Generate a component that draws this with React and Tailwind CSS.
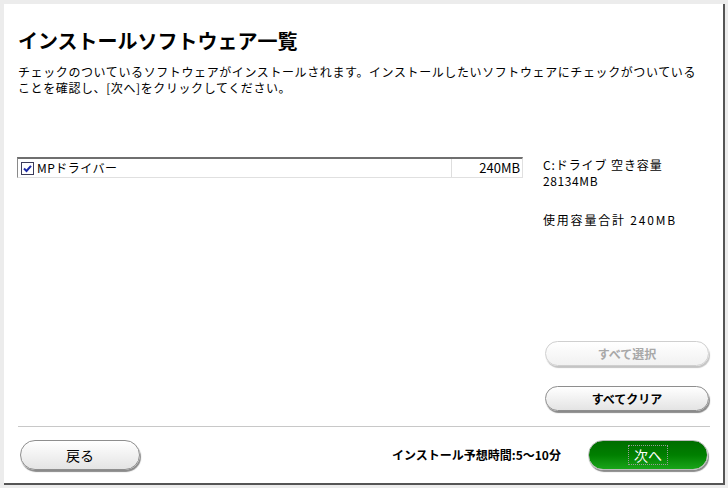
import React from 'react';

const jp = { fontFamily: '"Noto Sans CJK JP", "Liberation Sans", sans-serif' };

function PillButton({ children, disabled, className = '' }) {
  return (
    <button
      type="button"
      className={`flex items-center justify-center rounded-full border bg-gradient-to-b ${
        disabled
          ? 'border-[#cfcfcf] from-white to-[#f1f1f1] text-[#a8a8a8] shadow-[1px_2px_1px_#c4c4c4]'
          : 'border-[#8e8e8e] from-white to-[#e4e4e4] text-black shadow-[1px_2px_1px_#8a8a8a]'
      } ${className}`}
    >
      {children}
    </button>
  );
}

export default function App() {
  return (
    <div className="w-[728px] h-[488px] bg-[#ececec] pt-1 pl-1 overflow-hidden" style={jp}>
      <div className="w-[721px] h-[481px] bg-white border-r-2 border-b-2 border-[#555] flex flex-col pl-[13px] pt-[26px]">
        {/* タイトル */}
        <h1 className="ml-px text-[20px] leading-[22px] font-bold text-black">
          インストールソフトウェア一覧
        </h1>
        <div className="ml-px mt-[12px] text-[12px] text-black tracking-[0.6px]">
          <p className="h-4 leading-4 whitespace-nowrap">
            チェックのついているソフトウェアがインストールされます。インストールしたいソフトウェアにチェックがついている
          </p>
          <p className="h-4 leading-4 whitespace-nowrap">
            ことを確認し、[次へ]をクリックしてください。
          </p>
        </div>

        {/* 一覧と容量 */}
        <div className="mt-[61px] h-[254px] flex gap-5">
          <div className="w-[506px] h-[21px] border-t-2 border-l border-t-[#6f6f6f] border-l-[#8a8a8a] border-r border-b border-r-[#e0e0e0] border-b-[#e0e0e0] flex">
            <div className="flex-1 flex items-center gap-[3px] pl-[3px] border-r border-[#dedede]">
              <span className="w-[13px] h-[13px] border border-[#3b3b5a] bg-white flex items-center justify-center">
                <svg width="9" height="9" viewBox="0 0 9 9">
                  <path d="M1 4.5 L3.5 7 L8 1.8" fill="none" stroke="#1c2aa8" strokeWidth="2" />
                </svg>
              </span>
              <span className="text-[12px] leading-[16px] tracking-[0.5px] text-black">MPドライバー</span>
            </div>
            <div className="w-[70px] flex items-center justify-end pr-[2px] text-[13px] leading-[16px] text-black">
              240MB
            </div>
          </div>

          <div className="w-[166px] flex flex-col text-[12px] leading-[16px] text-black">
            <div className="h-4 tracking-[0.9px] whitespace-nowrap">C:ドライブ 空き容量</div>
            <div className="h-4 tracking-[0.6px]">28134MB</div>
            <div className="h-4 mt-[23px] tracking-[1.8px] whitespace-nowrap">使用容量合計 240MB</div>
            <div className="flex-1" />
            <PillButton disabled className="h-[25px] w-[164px] ml-[2px] text-[12px] font-bold">
              すべて選択
            </PillButton>
            <PillButton className="h-[25px] w-[164px] ml-[2px] mt-5 text-[12px] font-bold">
              すべてクリア
            </PillButton>
          </div>
        </div>

        {/* 区切り線 */}
        <div className="ml-px mt-[15px] w-[692px] border-t border-[#c8c8c8]" />

        {/* フッター */}
        <div className="mt-[13px] flex items-center">
          <PillButton className="ml-[3px] h-[30px] w-[120px] text-[14px]">戻る</PillButton>
          <div className="ml-[252px] w-[170px] text-[12px] font-bold text-black whitespace-nowrap">
            インストール予想時間:5～10分
          </div>
          <button
            type="button"
            className="ml-[26px] h-[30px] w-[120px] rounded-full border border-[#bdbdbd] bg-gradient-to-b from-[#006d00] via-[#007f00] to-[#19a519] shadow-[1px_2px_1px_#8a8a8a] flex items-center justify-center"
          >
            <span className="px-[5px] py-px border border-dotted border-[#9a9a9a] text-[14px] leading-[16px] text-white">
              次へ
            </span>
          </button>
        </div>
      </div>
    </div>
  );
}
